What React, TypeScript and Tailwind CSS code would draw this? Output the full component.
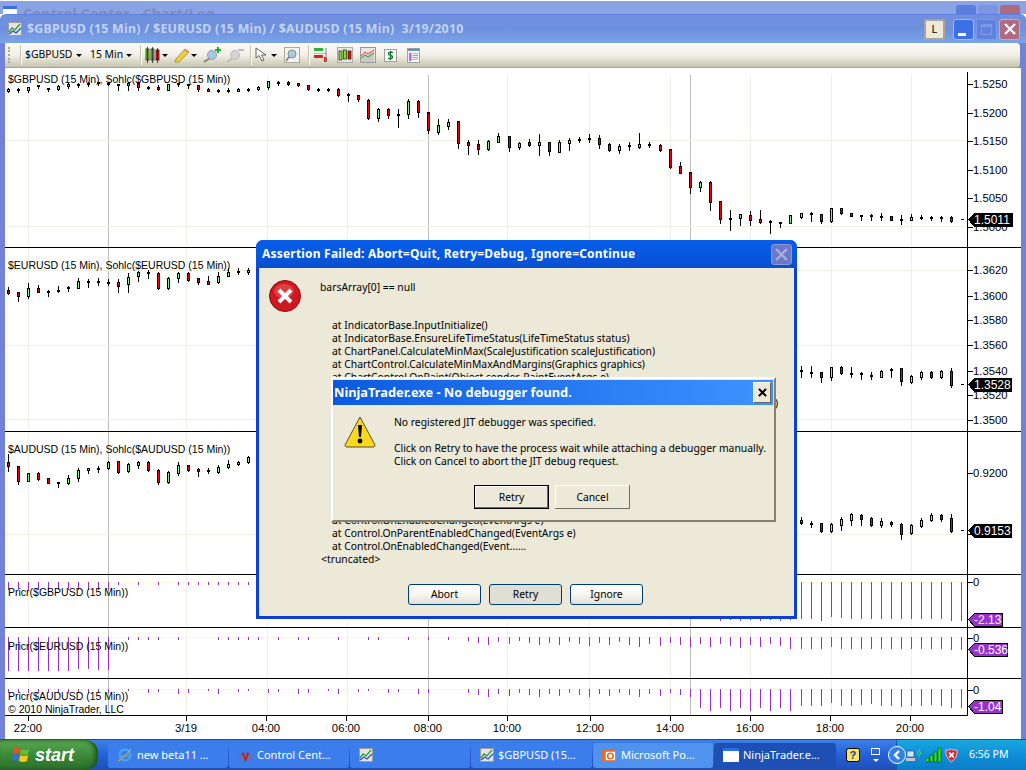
import React from "react"

// [high, low, bodyTop, bodyBottom, kind] in page pixels; g = hollow green, r = red, k = small black
type Candle = [number, number, number, number, "g" | "r" | "k"]

const gbp: Candle[] = [
  [88,92,89,91,"g"],[88,92,89,90,"k"],[87,92,87,90,"g"],[85,88,85,86,"k"],[88,91,88,89,"k"],[85,90,86,89,"g"],[83,88,84,86,"g"],[83,87,84,85,"k"],[82,86,83,84,"k"],[82,85,82,84,"k"],
  [82,85,83,84,"k"],[84,90,84,85,"k"],[82,90,83,85,"g"],[83,90,83,87,"r"],[86,89,87,88,"k"],[85,90,87,89,"r"],[84,90,84,90,"g"],[83,86,83,84,"k"],[84,88,84,85,"k"],[85,91,85,89,"r"],
  [88,91,89,91,"r"],[89,92,90,91,"k"],[88,92,90,91,"k"],[88,91,89,91,"g"],[88,91,89,90,"k"],[86,90,87,89,"g"],[81,89,81,87,"g"],[81,85,82,83,"k"],[81,85,82,84,"r"],[83,86,83,85,"r"],
  [85,90,85,89,"r"],[88,91,89,90,"k"],[88,91,89,90,"k"],[88,96,89,95,"r"],[93,101,94,95,"k"],[95,101,95,99,"r"],[99,119,100,118,"r"],[108,121,109,118,"g"],[108,118,109,115,"r"],[109,127,114,115,"k"],
  [99,118,101,114,"g"],[100,117,101,112,"r"],[112,133,112,130,"r"],[119,134,125,132,"g"],[119,129,122,126,"g"],[121,148,121,143,"r"],[140,154,142,145,"r"],[140,154,144,149,"r"],[140,150,141,149,"g"],[133,142,136,142,"g"],
  [136,151,136,147,"r"],[142,149,143,147,"g"],[139,146,142,145,"r"],[134,155,142,145,"g"],[142,155,142,151,"r"],[140,152,142,152,"g"],[138,150,140,143,"g"],[137,142,139,141,"k"],[134,142,138,140,"k"],[135,148,138,144,"r"],
  [143,151,144,150,"r"],[144,153,146,150,"g"],[142,150,145,147,"k"],[133,148,144,147,"g"],[142,147,144,146,"k"],[144,151,145,150,"r"],[149,168,149,167,"r"],[162,173,166,173,"r"],[172,193,172,187,"r"],[181,191,182,187,"g"],
  [181,210,182,202,"r"],[201,223,201,219,"r"],[210,230,218,220,"k"],[214,225,214,218,"g"],[211,225,215,220,"r"],[210,223,219,222,"r"],[220,233,221,222,"k"],[222,227,222,223,"k"],[215,223,215,223,"g"],[213,218,213,217,"g"],
  [212,221,213,214,"k"],[214,223,214,221,"r"],[208,222,208,221,"g"],[208,214,208,213,"r"],[213,216,213,216,"r"],[215,220,215,216,"k"],[214,220,215,217,"k"],[213,220,216,217,"k"],[216,220,216,220,"r"],[215,224,219,220,"k"],
  [214,220,217,220,"g"],[215,219,217,218,"k"],[216,220,217,219,"k"],[216,221,217,219,"k"],[216,222,217,221,"r"],
]

const eurLeft: Candle[] = [
  [287,294,290,293,"r"],[292,301,292,296,"r"],[283,298,288,296,"g"],[285,292,288,292,"r"],[290,296,291,291,"k"],[286,292,290,292,"k"],[286,291,287,288,"k"],[278,288,281,288,"g"],[279,287,281,282,"k"],[278,285,281,283,"k"],
  [279,285,282,283,"k"],[279,292,282,286,"r"],[273,292,277,284,"g"],[271,281,272,276,"g"],[270,278,272,273,"k"],[272,289,273,288,"r"],[277,289,278,288,"g"],[272,282,273,278,"g"],[272,281,273,280,"r"],[278,284,278,282,"r"],
  [276,284,281,284,"r"],[272,283,276,282,"g"],[268,276,272,276,"g"],[268,274,271,272,"k"],[268,274,270,272,"g"],
]
const eurRight: Candle[] = [
  [366,377,370,372,"k"],[366,377,372,373,"k"],[372,382,372,377,"r"],[367,380,367,377,"g"],[366,374,367,373,"r"],[367,377,373,374,"k"],[372,379,373,374,"k"],[372,379,375,376,"k"],[370,377,371,377,"g"],[368,377,369,370,"k"],
  [368,385,368,381,"r"],[375,383,376,382,"g"],[371,379,372,377,"g"],[371,378,372,377,"r"],[370,378,371,377,"g"],[368,387,371,385,"r"],
]
const audLeft: Candle[] = [
  [454,471,462,466,"r"],[466,484,466,481,"r"],[473,481,473,481,"g"],[472,480,473,479,"r"],[478,483,478,483,"r"],[482,487,482,484,"k"],[475,484,478,483,"g"],[468,481,470,478,"g"],[468,473,468,470,"g"],[466,472,468,469,"k"],
  [461,469,462,468,"g"],[461,473,461,472,"r"],[463,472,464,471,"g"],[461,468,462,465,"g"],[461,471,462,470,"r"],[469,484,470,482,"r"],[471,483,472,482,"g"],[462,475,465,473,"g"],[465,471,465,470,"r"],[468,476,469,470,"r"],
  [468,473,470,471,"k"],[465,473,467,472,"g"],[460,468,464,467,"g"],[461,465,462,464,"g"],[456,463,457,462,"g"],
]
const audRight: Candle[] = [
  [517,524,520,523,"r"],[521,527,523,524,"k"],[523,532,523,531,"r"],[523,532,524,531,"g"],[517,530,519,525,"g"],[513,525,514,520,"g"],[514,525,515,519,"r"],[517,526,518,525,"r"],[518,527,521,525,"g"],[521,526,522,523,"r"],
  [523,539,524,534,"r"],[524,534,525,533,"g"],[518,527,520,526,"g"],[513,521,515,520,"g"],[514,521,515,519,"r"],[514,532,518,531,"r"],
]

const xAt = (i: number) => 8 + i * 10 + (i < 50 ? 0 : i < 65 ? 1 : i < 79 ? 2 : 3)

function Candles({ data, start = 0 }: { data: Candle[]; start?: number }) {
  return (
    <>
      {data.map(([hi, lo, top, bot, kind], n) => {
        const x = xAt(start + n)
        return (
          <g key={n}>
            <line x1={x + 0.5} x2={x + 0.5} y1={hi} y2={lo + 1} stroke="#000" />
            {kind === "k" ? (
              <rect x={x - 1} y={top} width={3} height={Math.max(bot - top, 2)} fill="#000" />
            ) : (
              <rect x={x - 0.5} y={top + 0.5} width={2} height={Math.max(bot - top, 2)} fill={kind === "r" ? "#f00000" : "#90ee90"} stroke="#000" />
            )}
          </g>
        )
      })}
    </>
  )
}

// purple bars of the three Pricr panels: [index, bottom y]
const pricr1: [number, number][] = [
  ...[0,1,2,3,4,5,6,7,8,9,10].map((i): [number, number] => [i, 590]),
  ...[11,13,15,17,18,19,20,21,22,23,24].map((i): [number, number] => [i, 585]),
  ...[71,72,73,74,75,76,77,78].map((i): [number, number] => [i, 620 + (i % 2)]),
  ...[619,619,621,617,618,619,619,619,619,619,619,619,619,619,619,621,621].map((y, n): [number, number] => [79 + n, y]),
]
const pricr2: [number, number][] = [
  ...[671,671,671,671,671,671,671,669,669,670,670].map((y, n): [number, number] => [n, y]),
  ...[12,13,14,15,17,21,22,23,24,25,27,29,30,33,36,37,40,42,44].map((i): [number, number] => [i, 640]),
  ...Array.from({ length: 33 }, (_, n): [number, number] => [46 + n, 641 + ((n * 7) % 5) + Math.floor(n / 8)]),
  ...[649,649,649,647,649,649,649,649,649,649,649,649,649,649,649,650,650].map((y, n): [number, number] => [79 + n, y]),
]
const pricr3: [number, number][] = [
  ...[0,1,2,3,4,5,6,7,8,9,10].map((i): [number, number] => [i, 693]),
  ...Array.from({ length: 32 }, (_, n): [number, number] => [12 + n * 1, 691 + ((n * 3) % 4)]).filter(([i]) => i % 3 !== 1),
  ...Array.from({ length: 23 }, (_, n): [number, number] => [46 + n, 693 + ((n * 7) % 5)]),
  ...Array.from({ length: 10 }, (_, n): [number, number] => [69 + n, 708 + ((n * 3) % 6)]),
  ...[706,706,706,703,706,706,705,704,706,706,707,706,706,705,706,708,708].map((y, n): [number, number] => [79 + n, y]),
]

function PurpleBars({ bars, zero }: { bars: [number, number][]; zero: number }) {
  return (
    <>
      <line x1={5} x2={967} y1={zero + 0.5} y2={zero + 0.5} stroke="#fdf8d8" />
      {bars.map(([i, y]) => (
        <rect key={i} x={xAt(i)} y={zero} width={1} height={y - zero} fill="#9932cc" />
      ))}
    </>
  )
}

function Tag({ y, w, text, color }: { y: number; w: number; text: string; color: string }) {
  return (
    <g>
      <polygon points={`968.5,${y + 6.5} ${974.5},${y + 0.5} ${968 + w + 0.5},${y + 0.5} ${968 + w + 0.5},${y + 13.5} ${974.5},${y + 13.5}`} fill={color} stroke="#000" />
      <text x={974} y={y + 11} fill="#fff" className="text-[12px]">{text}</text>
    </g>
  )
}

const axisTicks: [number, string][] = [
  [84,"1.5250"],[113,"1.5200"],[141,"1.5150"],[170,"1.5100"],[198,"1.5050"],[227,"1.5000"],
  [270,"1.3620"],[296,"1.3600"],[320,"1.3580"],[345,"1.3560"],[371,"1.3540"],[395,"1.3520"],[420,"1.3500"],
  [473,"0.9200"],[534,"0.9150"],[582,"0"],[638,"0"],[690,"0"],
]
const gridX = [28, 186, 267, 347, 507, 589, 670, 750, 831, 911]
const grayX = [108, 428, 690]
const timeLabels: [number, string][] = [
  [28,"22:00"],[186,"3/19"],[266,"04:00"],[346,"06:00"],[428,"08:00"],[507,"10:00"],[590,"12:00"],[670,"14:00"],[750,"16:00"],[830,"18:00"],[910,"20:00"],
]

function Chart() {
  return (
    <svg viewBox="5 68 1016 671" className="w-[1016px] h-[671px] block bg-white font-['Liberation_Sans',sans-serif] text-[11.3px]" shapeRendering="crispEdges">
      {gridX.map((x) => <line key={x} x1={x + 0.5} x2={x + 0.5} y1={75} y2={715} stroke="#f0f0e2" />)}
      {grayX.map((x) => <line key={x} x1={x + 0.5} x2={x + 0.5} y1={75} y2={715} stroke="#bdbdbd" />)}
      {[140, 226, 270, 345, 419, 534].map((y) => <line key={y} x1={5} x2={967} y1={y + 0.5} y2={y + 0.5} stroke="#f0f0e2" />)}

      <Candles data={gbp} />
      <Candles data={eurLeft} />
      <Candles data={eurRight} start={79} />
      <Candles data={audLeft} />
      <Candles data={audRight} start={79} />
      <rect x={961} y={219} width={3} height={1} fill="#000" />
      <rect x={961} y={384} width={3} height={1} fill="#000" />
      <rect x={961} y={530} width={3} height={1} fill="#000" />

      <PurpleBars bars={pricr1} zero={582} />
      <PurpleBars bars={pricr2} zero={637} />
      <PurpleBars bars={pricr3} zero={689} />

      {[247, 431, 574, 627, 678].map((y) => <line key={y} x1={5} x2={1021} y1={y + 0.5} y2={y + 0.5} stroke="#000" />)}
      <line x1={5} x2={968} y1={715.5} y2={715.5} stroke="#000" />
      <line x1={967.5} x2={967.5} y1={72} y2={716} stroke="#000" />

      {axisTicks.map(([y, t]) => (
        <g key={y}>
          <line x1={968} x2={973} y1={y + 0.5} y2={y + 0.5} stroke="#000" />
          <text x={973} y={y + 4}>{t}</text>
        </g>
      ))}
      {timeLabels.map(([x, t]) => (
        <g key={x}>
          <line x1={x + 0.5} x2={x + 0.5} y1={716} y2={721} stroke="#000" />
          <text x={x} y={732} textAnchor="middle">{t}</text>
        </g>
      ))}

      <g className="text-[10.5px]">
        <text x={8} y={83}>$GBPUSD (15 Min), Sohlc($GBPUSD (15 Min))</text>
        <text x={8} y={269}>$EURUSD (15 Min), Sohlc($EURUSD (15 Min))</text>
        <text x={8} y={453}>$AUDUSD (15 Min), Sohlc($AUDUSD (15 Min))</text>
        <text x={8} y={596}>Pricr($GBPUSD (15 Min))</text>
        <text x={8} y={650}>Pricr($EURUSD (15 Min))</text>
        <text x={8} y={700}>Pricr($AUDUSD (15 Min))</text>
        <text x={8} y={713}>© 2010 NinjaTrader, LLC</text>
      </g>

      <Tag y={213} w={44} text="1.5011" color="#000" />
      <Tag y={378} w={43} text="1.3528" color="#000" />
      <Tag y={524} w={43} text="0.9153" color="#000" />
      <Tag y={613} w={34} text="-2.13" color="#9932cc" />
      <Tag y={643} w={39} text="-0.536" color="#9932cc" />
      <Tag y={700} w={34} text="-1.04" color="#9932cc" />
    </svg>
  )
}

function ChartGlyph({ className }: { className: string }) {
  return (
    <svg viewBox="0 0 14 14" className={className}>
      <rect x="0.5" y="0.5" width="13" height="13" fill="#e4e4e0" stroke="#9a9a9a" />
      <path d="M1 10 L4 6 L7 8 L12 2" stroke="#2a9a3a" strokeWidth="1.3" fill="none" />
      <path d="M1 12 L5 9 L8 11 L13 6" stroke="#2255c0" strokeWidth="1.3" fill="none" />
    </svg>
  )
}

function Caret({ className }: { className: string }) {
  return <span className={`block shrink-0 w-0 h-0 border-x-[3px] border-x-transparent border-t-[3px] border-t-black ${className}`} />
}

function Sep({ className }: { className: string }) {
  return <span className={`block shrink-0 w-[2px] h-[20px] bg-[#c4c3ae] border-r border-white ${className}`} />
}

function Toolbar() {
  return (
    <div className="h-[25px] mr-[1px] rounded-r-[4px] bg-gradient-to-b from-[#fbfaf6] via-[#f2f0e8] to-[#c6c5ad] border-b border-[#a5a66e] flex items-center text-[10.4px] text-black font-['Noto_Sans',sans-serif]">
      <span className="ml-[3px] w-[3px] h-[16px] border-l-2 border-dotted border-[#a8a79a]" />
      <Sep className="ml-[9px]" />
      <span className="ml-[3px] w-[44px] whitespace-nowrap">$GBPUSD</span>
      <Caret className="ml-[7px]" />
      <span className="ml-[8px] w-[31px] whitespace-nowrap">15 Min</span>
      <Caret className="ml-[5px]" />
      <Sep className="ml-[8px]" />
      <svg viewBox="0 0 16 16" className="ml-[3px] w-[16px] h-[16px]">
        <rect x="1" y="2" width="3" height="11" fill="#80e020" stroke="#222" strokeWidth="0.8" />
        <rect x="6" y="2" width="3" height="11" fill="#80e020" stroke="#222" strokeWidth="0.8" />
        <rect x="11" y="3" width="3" height="10" fill="#e81010" stroke="#222" strokeWidth="0.8" />
        <path d="M2.5 0v16M7.5 0v16M12.5 1v15" stroke="#222" strokeWidth="0.8" />
      </svg>
      <Caret className="ml-[1px]" />
      <svg viewBox="0 0 16 16" className="ml-[6px] w-[16px] h-[16px]">
        <path d="M2 12 L11 2 L15 5 L5 15 L1 15 Z" fill="#f0d040" stroke="#a08020" strokeWidth="0.8" />
        <path d="M11 2 L15 5 L14 6 L10 3 Z" fill="#e88080" />
      </svg>
      <Caret className="ml-[1px]" />
      <svg viewBox="0 0 18 16" className="ml-[6px] w-[18px] h-[16px]">
        <path d="M7 11 L1 15" stroke="#888" strokeWidth="2" />
        <circle cx="9" cy="8" r="4.5" fill="#a8c8e8" stroke="#9a9a9a" />
        <path d="M15 0v6M12 3h6" stroke="#18b030" strokeWidth="2" />
      </svg>
      <svg viewBox="0 0 18 16" className="ml-[5px] w-[18px] h-[16px]">
        <path d="M7 11 L1 15" stroke="#bbb" strokeWidth="2" />
        <circle cx="9" cy="8" r="4.5" fill="#d4d4d4" stroke="#bdbdbd" />
        <path d="M12 3h6" stroke="#bdbdbd" strokeWidth="2" />
      </svg>
      <Sep className="ml-[6px]" />
      <svg viewBox="0 0 14 16" className="ml-[3px] w-[14px] h-[16px]">
        <path d="M1 1 L1 11 L4 8.5 L7 14 L9 13 L6.5 8 L11 8 Z" fill="#fff" stroke="#555" strokeWidth="0.9" />
      </svg>
      <Caret className="ml-[2px]" />
      <svg viewBox="0 0 16 16" className="ml-[7px] w-[16px] h-[16px]">
        <rect x="0.5" y="0.5" width="15" height="15" fill="#f4f3ec" stroke="#a9a9a0" />
        <circle cx="8" cy="7" r="4" fill="#a8c8e8" stroke="#8a8a8a" />
        <path d="M5 10 L2 14" stroke="#777" strokeWidth="1.6" />
      </svg>
      <Sep className="ml-[8px]" />
      <svg viewBox="0 0 16 16" className="ml-[3px] w-[16px] h-[16px]">
        <rect x="1" y="1" width="9" height="3" fill="#30b040" />
        <rect x="1" y="6" width="13" height="1" fill="#bbb" />
        <rect x="1" y="8" width="9" height="3" fill="#e02020" />
        <rect x="11" y="10" width="3" height="5" fill="#e02020" />
        <path d="M13 1v14" stroke="#888" />
      </svg>
      <svg viewBox="0 0 16 16" className="ml-[8px] w-[16px] h-[16px]">
        <rect x="0.5" y="0.5" width="15" height="15" fill="#e8e8e0" stroke="#aaa" />
        <rect x="2" y="4" width="3" height="9" fill="#80e020" stroke="#222" strokeWidth="0.7" />
        <rect x="6.5" y="3" width="3" height="9" fill="#80e020" stroke="#222" strokeWidth="0.7" />
        <rect x="11" y="4" width="3" height="8" fill="#e01010" stroke="#222" strokeWidth="0.7" />
      </svg>
      <svg viewBox="0 0 16 16" className="ml-[7px] w-[16px] h-[16px]">
        <rect x="0.5" y="0.5" width="15" height="15" fill="#e8e8e0" stroke="#999" />
        <path d="M1 10 L5 6 L8 8 L14 4 V15 H1Z" fill="#c9c9c4" />
        <path d="M1 9 L5 5 L8 7 L14 3" stroke="#e04040" fill="none" />
        <path d="M1 11 L5 8 L8 10 L14 6" stroke="#30a040" fill="none" />
      </svg>
      <svg viewBox="0 0 14 16" className="ml-[8px] w-[13px] h-[15px]">
        <rect x="0.5" y="1.5" width="13" height="13" fill="#fff" stroke="#999" />
        <path d="M9.5 5 C8 3.8 4.5 4 4.8 6.2 C5 8 9.2 7.5 9.3 9.6 C9.4 11.6 6 12 4.5 10.8 M7 3v10" stroke="#108030" strokeWidth="1.5" fill="none" />
      </svg>
      <svg viewBox="0 0 14 16" className="ml-[10px] w-[13px] h-[15px]">
        <rect x="0.5" y="0.5" width="13" height="15" fill="#fff" stroke="#999" />
        <rect x="1" y="1" width="12" height="2" fill="#4090e0" />
        <rect x="2" y="5" width="3" height="9" fill="#b070e0" />
        <path d="M6 6h6M6 8h6M6 10h6M6 12h6" stroke="#999" />
      </svg>
    </div>
  )
}

function XpButton({ text, hover }: { text: string; hover?: boolean }) {
  return (
    <div className={`w-[73px] h-[21px] rounded-[3px] border border-[#003c74] flex items-center justify-center text-black ${hover ? "bg-[#e0dfd6]" : "bg-gradient-to-b from-white via-[#f6f5f0] to-[#e3e1d6]"}`}>
      {text}
    </div>
  )
}

const stack = [
  "at IndicatorBase.InputInitialize()",
  "at IndicatorBase.EnsureLifeTimeStatus(LifeTimeStatus status)",
  "at ChartPanel.CalculateMinMax(ScaleJustification scaleJustification)",
  "at ChartControl.CalculateMinMaxAndMargins(Graphics graphics)",
  "at ChartControl.OnPaint(Object sender, PaintEventArgs e)",
  "at Control.OnPaint(PaintEventArgs e)",
  "at Control.PaintWithErrorHandling(PaintEventArgs e, Int16 layer, Boolean disposeEventArgs)",
  "at Control.WmPaint(Message& m)",
  "at Control.WndProc(Message& m)",
  "at ScrollableControl.WndProc(Message& m)",
  "at Control.ControlNativeWindow.OnMessage(Message& m)",
  "at Control.ControlNativeWindow.WndProc(Message& m)",
  "at NativeWindow.DebuggableCallback(IntPtr hWnd)",
  "at Control.Update()",
  "at Control.Refresh()",
  "at Control.OnEnabledChanged(EventArgs e)",
  "at Control.OnParentEnabledChanged(EventArgs e)",
]

function AssertionDialog() {
  return (
    <div className="absolute left-[256px] top-[240px] w-[541px] h-[379px] flex flex-col rounded-t-[7px] bg-[#0a3fd8] p-[3px] pt-0 font-['Noto_Sans',sans-serif]">
      <div className="h-[28px] shrink-0 -mx-[3px] rounded-t-[7px] bg-gradient-to-b from-[#0a5fe8] via-[#0458e0] to-[#0a4fd0] flex items-center pl-[6px] pr-[5px]">
        <span className="text-white font-bold text-[12px] tracking-[0.2px]">Assertion Failed: Abort=Quit, Retry=Debug, Ignore=Continue</span>
        <span className="ml-auto w-[21px] h-[21px] rounded-[3px] bg-[#6c78c8] border border-[#8d97d8] flex items-center justify-center">
          <svg viewBox="0 0 12 12" className="w-[13px] h-[13px]"><path d="M1 1 L11 11 M11 1 L1 11" stroke="#a9b0de" strokeWidth="2" /></svg>
        </span>
      </div>
      <div className="flex-1 bg-[#ece9d8] text-[10.35px] leading-[13px] text-black flex flex-col">
        <div className="flex pl-[10px] pt-[12px]">
          <svg viewBox="0 0 32 32" className="w-[32px] h-[32px] shrink-0">
            <circle cx="16" cy="16" r="15.5" fill="#d01820" stroke="#8a1010" />
            <ellipse cx="15" cy="11" rx="10" ry="7" fill="#e85858" opacity="0.6" />
            <path d="M10 10 L22 22 M22 10 L10 22" stroke="#fff" strokeWidth="4" />
          </svg>
          <div className="ml-[19px] pt-[1px]">barsArray[0] == null</div>
        </div>
        <div className="pl-[73px] pt-[7px] whitespace-nowrap">
          {stack.map((l, i) => <div key={i}>{l}</div>)}
          <div>at Control.OnEnabledChanged(Event……</div>
          <div className="-ml-[11px]">&lt;truncated&gt;</div>
        </div>
        <div className="mt-[18px] ml-[149px] flex gap-[8px]">
          <XpButton text="Abort" />
          <XpButton text="Retry" hover />
          <XpButton text="Ignore" />
        </div>
      </div>
    </div>
  )
}

function JitDialog() {
  return (
    <div className="absolute left-[331px] top-[377px] w-[445px] h-[145px] bg-[#ece9d8] border-2 border-t-white border-l-white border-r-[#85836f] border-b-[#85836f] flex flex-col font-['Noto_Sans',sans-serif] text-[10.35px] leading-[13px] text-black">
      <div className="h-[25px] shrink-0 mt-[1px] mr-[1px] bg-gradient-to-r from-[#0a5ae0] to-[#3f93ff] flex items-center pl-[1px] pr-[2px]">
        <span className="text-white font-bold text-[12.8px]">NinjaTrader.exe - No debugger found.</span>
        <span className="ml-auto w-[18px] h-[21px] bg-[#ece9d8] border border-t-white border-l-white border-r-[#666] border-b-[#666] flex items-center justify-center">
          <svg viewBox="0 0 10 10" className="w-[9px] h-[9px]"><path d="M1 1 L9 9 M9 1 L1 9" stroke="#000" strokeWidth="2.2" /></svg>
        </span>
      </div>
      <div className="flex pl-[11px] pt-[11px] whitespace-nowrap">
        <svg viewBox="0 0 32 32" className="w-[32px] h-[32px] shrink-0">
          <path d="M16 1 L31 29 Q31 31 29 31 L3 31 Q1 31 1 29 Z" fill="#fcd81c" stroke="#5a5030" />
          <path d="M14 9 H18 L17 21 H15 Z" fill="#000" />
          <circle cx="16" cy="25" r="2.4" fill="#000" />
        </svg>
        <div className="ml-[18px]">
          <div>No registered JIT debugger was specified.</div>
          <div className="mt-[13px]">Click on Retry to have the process wait while attaching a debugger manually.</div>
          <div>Click on Cancel to abort the JIT debug request.</div>
        </div>
      </div>
      <div className="mt-[17px] ml-[141px] flex gap-[6px]">
        <div className="w-[75px] h-[24px] border border-black flex items-center justify-center bg-[#ece9d8] shadow-[inset_-1px_-1px_0_#716f64,inset_1px_1px_0_#fff]">Retry</div>
        <div className="w-[75px] h-[24px] flex items-center justify-center bg-[#ece9d8] shadow-[inset_-1px_-1px_0_#716f64,inset_1px_1px_0_#fff]">Cancel</div>
      </div>
    </div>
  )
}

function TaskButton({ text, width, tone = "base", icon }: { text: string; width: string; tone?: "base" | "hover" | "down"; icon: React.ReactNode }) {
  const toneClass =
    tone === "hover" ? "bg-[#4f93ee]" : tone === "down" ? "bg-[#1e4fb4]" : "bg-[#3b7deb]"
  return (
    <div className={`${width} h-[25px] mr-[1px] rounded-[3px] ${toneClass} flex items-center gap-[4px] pl-[9px] text-white text-[11px] whitespace-nowrap overflow-hidden`}>
      {icon}
      {text}
    </div>
  )
}

function Taskbar() {
  return (
    <div className="h-[31px] shrink-0 flex items-center bg-gradient-to-b from-[#3c80e8] via-[#2560d8] to-[#1f50b8] border-t border-[#1848b0] font-['Noto_Sans',sans-serif]">
      <div className="w-[98px] h-full rounded-r-[12px] bg-gradient-to-b from-[#5aa852] via-[#3a8a38] to-[#2c6e2c] flex items-center pl-[12px] shadow-[inset_-3px_0_4px_#1e541e]">
        <svg viewBox="0 0 18 18" className="w-[18px] h-[18px]">
          <path d="M1 3 Q5 1 8 3 L7 8 Q4 6 1 8 Z" fill="#e85020" />
          <path d="M9 3 Q13 5 17 3 L16 8 Q12 10 8 8 Z" fill="#60c030" />
          <path d="M1 9 Q4 7 7 9 L6 15 Q3 13 0 15 Z" fill="#3070e0" />
          <path d="M8 9 Q12 11 16 9 L15 15 Q11 17 7 15 Z" fill="#f8c820" />
        </svg>
        <span className="ml-[5px] text-white font-bold italic text-[18px] leading-none font-['Liberation_Sans',sans-serif]">start</span>
      </div>
      <div className="ml-[10px] flex items-center">
        <TaskButton width="w-[120px]" text="new beta11 …" icon={
          <svg viewBox="0 0 16 16" className="w-[16px] h-[16px] shrink-0">
            <circle cx="8" cy="8" r="5.5" fill="none" stroke="#4aa0e8" strokeWidth="2.4" />
            <path d="M2 9h12" stroke="#4aa0e8" strokeWidth="1.6" />
            <path d="M1 14 Q6 12 14 2" stroke="#f0b030" fill="none" />
          </svg>
        } />
        <TaskButton width="w-[120px]" text="Control Cent…" icon={
          <svg viewBox="0 0 16 16" className="w-[15px] h-[15px] shrink-0">
            <path d="M2 12 A6 6 0 0 1 14 12" fill="none" stroke="#7a6a80" strokeWidth="2" />
            <path d="M5 5 L8 13 L11 5" fill="none" stroke="#c02020" strokeWidth="2" />
          </svg>
        } />
        <TaskButton width="w-[120px]" text="" icon={<ChartGlyph className="w-[14px] h-[14px] shrink-0" />} />
        <TaskButton width="w-[121px]" text="$GBPUSD (15…" icon={<ChartGlyph className="w-[14px] h-[14px] shrink-0" />} />
        <TaskButton width="w-[120px]" tone="hover" text="Microsoft Po…" icon={
          <svg viewBox="0 0 16 16" className="w-[15px] h-[15px] shrink-0">
            <rect x="0" y="1" width="14" height="14" rx="2" fill="#e86a28" />
            <rect x="4" y="4" width="10" height="9" fill="#fff" />
            <circle cx="9" cy="8.5" r="3" fill="none" stroke="#e86a28" strokeWidth="1.6" />
          </svg>
        } />
        <TaskButton width="w-[122px]" tone="down" text="NinjaTrader.e…" icon={
          <svg viewBox="0 0 16 14" className="w-[16px] h-[14px] shrink-0">
            <rect x="0" y="0" width="16" height="14" fill="#fff" />
            <rect x="0" y="0" width="16" height="3" fill="#2a70e0" />
          </svg>
        } />
      </div>
      <svg viewBox="0 0 14 14" className="ml-[9px] w-[14px] h-[14px]">
        <rect x="0.5" y="0.5" width="13" height="13" rx="2" fill="#f8e858" stroke="#000" />
        <text x="3.5" y="11" fontSize="11" fontWeight="700" fill="#2030a0" fontFamily="Liberation Sans">?</text>
      </svg>
      <div className="ml-[11px] w-[9px] flex flex-col items-center gap-[4px]">
        <span className="w-[9px] h-[7px] border border-white" />
        <span className="w-0 h-0 border-x-[3px] border-x-transparent border-t-[3px] border-t-white" />
      </div>
      <div className="ml-[16px] flex-1 h-full bg-gradient-to-b from-[#18a8e0] via-[#0f8ed8] to-[#0c7cc8] border-l border-[#0a5fb0] flex items-center">
        <span className="-ml-[9px] w-[18px] h-[18px] rounded-full bg-[#2f80e8] border border-white flex items-center justify-center">
          <svg viewBox="0 0 10 10" className="w-[10px] h-[10px]"><path d="M7 1 L3 5 L7 9" stroke="#fff" strokeWidth="2.4" fill="none" /></svg>
        </span>
        <svg viewBox="0 0 18 16" className="w-[18px] h-[16px]">
          <rect x="1" y="4" width="7" height="6" fill="#cfe4f8" stroke="#305080" strokeWidth="0.7" />
          <rect x="0" y="11" width="9" height="3" fill="#bcc8d8" />
          <path d="M11 4 Q13 6 11 8 M13 2 Q16 6 13 10" stroke="#40e040" fill="none" />
        </svg>
        <svg viewBox="0 0 16 16" className="ml-[2px] w-[16px] h-[16px]">
          <path d="M0 15h3v-4h-3zM4 15h3v-7h-3zM8 15h3v-10h-3zM12 15h3v-14h-3z" fill="#30e030" stroke="#043" strokeWidth="0.6" />
        </svg>
        <svg viewBox="0 0 14 16" className="ml-[3px] w-[13px] h-[15px]">
          <path d="M7 1 Q10 3 13 2 Q14 10 7 15 Q0 10 1 2 Q4 3 7 1Z" fill="#c83040" stroke="#fff" strokeWidth="0.7" />
          <path d="M4.5 5 L9.5 10 M9.5 5 L4.5 10" stroke="#fff" strokeWidth="1.8" />
        </svg>
        <span className="ml-[11px] text-white text-[10.5px]">6:56 PM</span>
      </div>
    </div>
  )
}

export default function App() {
  return (
    <div className="relative w-[1026px] h-[770px] overflow-hidden bg-white flex flex-col">
      {/* window behind, only its top edge shows */}
      <div className="h-[13px] shrink-0 mt-[1px] bg-[#8aa3e4] flex items-start overflow-hidden font-['Noto_Sans',sans-serif]">
        <div className="ml-[3px] mt-[5px] w-[14px] h-[14px] bg-white border-t-[3px] border-[#3a70e0]" />
        <span className="ml-[6px] mt-[5px] text-[#7e8db8] font-bold text-[14px] tracking-[0.3px] leading-[15px]">Control Center - Chart/Log</span>
        <div className="ml-auto mr-[6px] mt-[4px] flex gap-[2px]">
          <span className="w-[20px] h-[20px] rounded-[3px] bg-[#5a7ee0]" />
          <span className="w-[20px] h-[20px] rounded-[3px] bg-[#7d95e0]" />
          <span className="w-[20px] h-[20px] rounded-[3px] bg-[#b06a80]" />
        </div>
      </div>

      {/* chart window */}
      <div className="flex-1 flex flex-col bg-[#7182d8] pl-[5px] pr-[5px] rounded-t-[6px] border-t border-[#5f7fe0]">
        <div className="h-[28px] -ml-[5px] -mr-[5px] shrink-0 rounded-t-[6px] bg-gradient-to-b from-[#708fdc] via-[#6e90de] to-[#7aa4e8] flex items-center pl-[8px] pr-[6px] font-['Noto_Sans',sans-serif]">
          <ChartGlyph className="w-[14px] h-[14px]" />
          <span className="ml-[5px] text-[#c3d3f3] font-bold text-[12.4px] tracking-[0.25px]">$GBPUSD (15 Min) / $EURUSD (15 Min) / $AUDUSD (15 Min)&nbsp;&nbsp;3/19/2010</span>
          <span className="ml-auto w-[21px] h-[21px] border-[2px] border-[#a8a498] bg-[#ece9d8] flex items-center justify-center text-[11px] text-black">L</span>
          <span className="ml-[8px] w-[21px] h-[21px] rounded-[3px] border border-[#a6bcf0] bg-[#3f6fe4] flex items-end justify-start p-[3px]">
            <span className="ml-[1px] w-[8px] h-[3px] bg-white" />
          </span>
          <span className="ml-[2px] w-[21px] h-[21px] rounded-[3px] border border-[#7b98e8] bg-[#5e82de] flex items-center justify-center">
            <span className="w-[11px] h-[11px] border border-[#7f9ae6] border-t-[3px]" />
          </span>
          <span className="ml-[2px] w-[21px] h-[21px] rounded-[3px] border border-[#c8a8c0] bg-[#b16a82] flex items-center justify-center">
            <svg viewBox="0 0 12 12" className="w-[12px] h-[12px]"><path d="M1 1 L11 11 M11 1 L1 11" stroke="#fff" strokeWidth="2.2" /></svg>
          </span>
        </div>
        <Toolbar />
        <div className="flex-1 overflow-hidden">
          <Chart />
        </div>
      </div>

      <Taskbar />
      <AssertionDialog />
      <JitDialog />
    </div>
  )
}
